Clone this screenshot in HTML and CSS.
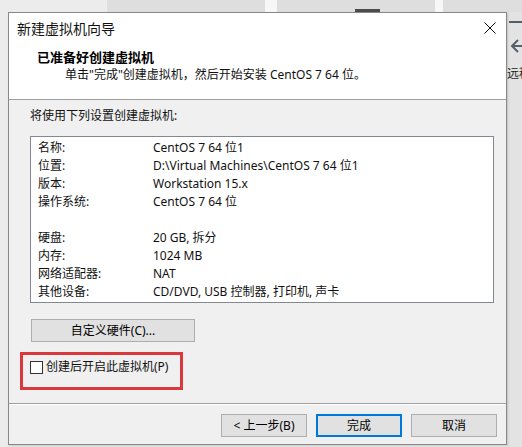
FILE: index.html
```html
<!DOCTYPE html>
<html lang="zh-CN">
<head>
<meta charset="utf-8">
<title>新建虚拟机向导</title>
<link rel="stylesheet" href="styles.css">
</head>
<body>
<div class="desktop">
  <div class="bg-strip">
    <div class="bg-panel p1"></div>
    <div class="bg-gap"></div>
    <div class="bg-panel p2"><span class="bg-bar"></span></div>
    <div class="bg-gap g2"></div>
    <div class="bg-panel p3"></div>
  </div>
  <div class="side">
    <span class="side-line"></span>
    <span class="side-arrow">
      <svg width="14" height="16" viewBox="0 0 14 16"><path d="M13 8H2M8 2L2 8l6 6" fill="none" stroke="#56606a" stroke-width="2"/></svg>
    </span>
    <span class="side-text">远程</span>
  </div>

  <div class="dialog">
    <div class="header">
      <div class="titlebar">
        <span class="title">新建虚拟机向导</span>
        <span class="close">
          <svg width="12" height="12" viewBox="0 0 12 12"><path d="M0.5 0.5L11.5 11.5M11.5 0.5L0.5 11.5" stroke="#111" stroke-width="1"/></svg>
        </span>
      </div>
      <div class="heading">已准备好创建虚拟机</div>
      <div class="subtitle">单击"完成"创建虚拟机，然后开始安装 CentOS 7 64 位。</div>
    </div>
    <div class="body">
      <div class="intro">将使用下列设置创建虚拟机:</div>
      <div class="summary">
        <div class="row"><span class="k">名称:</span><span class="v">CentOS 7 64 位1</span></div>
        <div class="row"><span class="k">位置:</span><span class="v">D:\Virtual Machines\CentOS 7 64 位1</span></div>
        <div class="row"><span class="k">版本:</span><span class="v">Workstation 15.x</span></div>
        <div class="row"><span class="k">操作系统:</span><span class="v">CentOS 7 64 位</span></div>
        <div class="row"><span class="k">&nbsp;</span><span class="v"></span></div>
        <div class="row"><span class="k">硬盘:</span><span class="v">20 GB, 拆分</span></div>
        <div class="row"><span class="k">内存:</span><span class="v">1024 MB</span></div>
        <div class="row"><span class="k">网络适配器:</span><span class="v">NAT</span></div>
        <div class="row"><span class="k">其他设备:</span><span class="v">CD/DVD, USB 控制器, 打印机, 声卡</span></div>
      </div>
      <button class="btn custom">自定义硬件(C)...</button>
      <div class="highlight">
        <label class="check"><span class="box"></span><span>创建后开启此虚拟机(P)</span></label>
      </div>
    </div>
    <div class="footer">
      <button class="btn nav">&lt; 上一步(B)</button>
      <button class="btn nav primary">完成</button>
      <button class="btn nav">取消</button>
    </div>
  </div>
</div>
</body>
</html>
```
FILE: styles.css
```css
* { box-sizing: border-box; }
html, body {
  margin: 0;
  padding: 0;
  width: 522px;
  height: 447px;
  overflow: hidden;
}
body {
  background: #ebebeb;
  font-family: "Noto Sans", "Noto Sans CJK SC", sans-serif;
  font-size: 12px;
  color: #000;
}
.desktop {
  position: relative;
  width: 522px;
  height: 447px;
  background: #ececec;
}
.bg-strip {
  display: flex;
  height: 12px;
}
.bg-panel { background: #dedede; position: relative; }
.p1 { width: 265px; margin-left: 107px; }
.bg-gap { width: 12px; background: #f7f7f7; }
.p2 { width: 158px; }
.g2 { width: 8px; }
.p3 { flex: 1; }
.bg-bar {
  position: absolute;
  left: 78px;
  top: 9px;
  width: 25px;
  height: 3px;
  background: #4c4c4c;
}
.bg-strip .p1 { width: 158px; }
.side {
  position: absolute;
  left: 507px;
  top: 12px;
  width: 15px;
  height: 435px;
  background: #e3e3e3;
  overflow: hidden;
}
.side-line {
  position: absolute;
  left: 2px;
  top: 9px;
  width: 14px;
  height: 2px;
  background: #565d63;
}
.side-arrow {
  position: absolute;
  left: 3px;
  top: 26px;
  display: block;
}
.side-text {
  position: absolute;
  left: 0;
  top: 55px;
  font-size: 12px;
  line-height: 14px;
  color: #222;
  white-space: nowrap;
}

.dialog {
  position: absolute;
  left: 8px;
  top: 12px;
  width: 499px;
  height: 433px;
  border: 1px solid #888;
  background: #f0f0f0;
  display: flex;
  flex-direction: column;
  box-shadow: 1px 1px 2px rgba(0,0,0,0.15);
}
.header {
  background: #fff;
  height: 87px;
  border-bottom: 1px solid #a0a0a0;
  padding: 0;
}
.titlebar {
  display: flex;
  align-items: center;
  justify-content: space-between;
  height: 30px;
  padding: 2px 10px 0 8px;
}
.title {
  font-size: 14px;
  line-height: 16px;
  color: #111;
}
.close { display: block; height: 12px; margin-top: -2px; }
.close svg { display: block; }
.heading {
  font-weight: bold;
  font-size: 13px;
  line-height: 16px;
  padding-left: 28px;
  margin-top: 6px;
}
.subtitle {
  font-size: 12px;
  line-height: 16px;
  padding-left: 56px;
  margin-top: 2px;
  color: #111;
}
.body {
  flex: 1;
  padding: 8px 12px 0 21px;
  border-bottom: 1px solid #a0a0a0;
  display: flex;
  flex-direction: column;
  align-items: flex-start;
}
.intro {
  line-height: 16px;
  height: 16px;
  color: #111;
}
.summary {
  margin-top: 12px;
  width: 464px;
  height: 167px;
  background: #fff;
  border: 1px solid #828790;
  padding: 2px 0 0 7px;
}
.row {
  display: flex;
  height: 18px;
  line-height: 18px;
  white-space: nowrap;
}
.k { width: 115px; color: #111; }
.v { color: #111; }
.btn {
  font-family: inherit;
  font-size: 12px;
  color: #000;
  background: #e1e1e1;
  border: 1px solid #adadad;
  padding: 0;
  margin: 0;
  height: 23px;
  line-height: 20px;
}
.custom {
  margin-top: 16px;
  margin-left: 1px;
  width: 164px;
}
.highlight {
  margin-top: 10px;
  margin-left: -10px;
  width: 163px;
  height: 38px;
  border: 3px solid #d9383d;
  padding: 5px 0 0 7px;
}
.check {
  display: flex;
  align-items: center;
  gap: 3px;
  line-height: 14px;
  color: #111;
}
.box {
  width: 13px;
  height: 13px;
  border: 1px solid #333;
  background: #fff;
}
.footer {
  height: 40px;
  display: flex;
  justify-content: flex-end;
  gap: 9px;
  padding: 9px 9px 0 0;
  border-top: 1px solid #fff;
}
.nav { width: 86px; }
.primary {
  border: 2px solid #0078d7;
  line-height: 18px;
}
```
